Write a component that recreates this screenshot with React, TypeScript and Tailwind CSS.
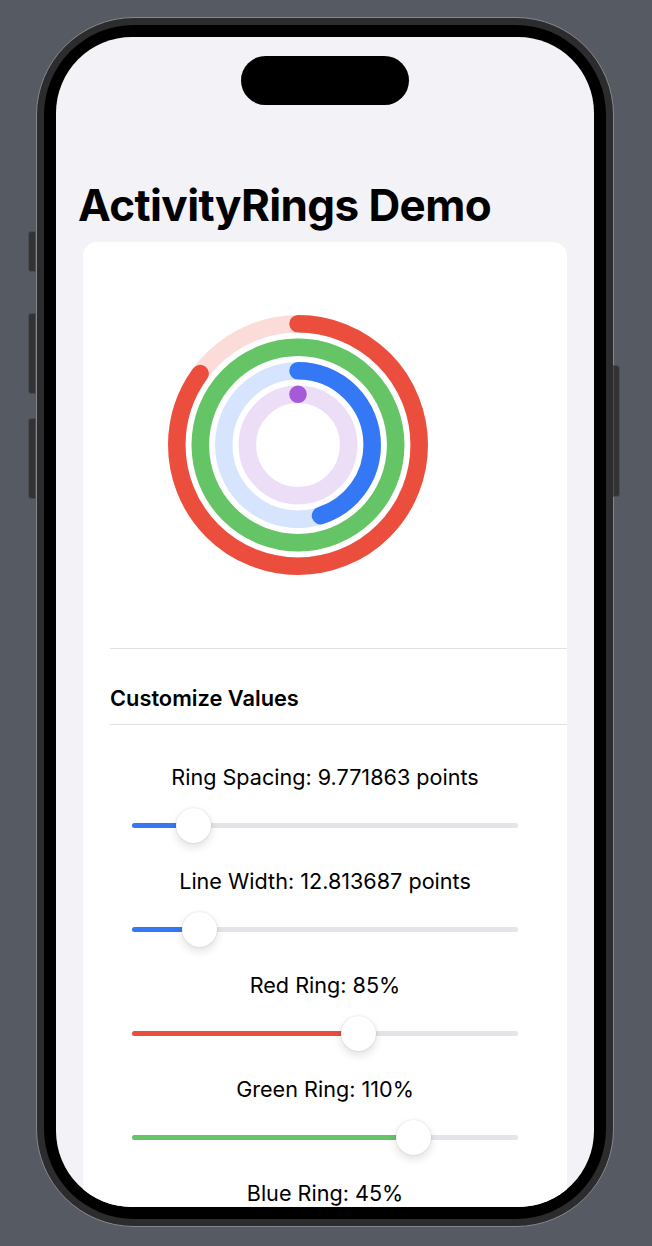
import React from "react";

type RingDef = { r: number; color: string; p: number };

function Rings() {
  const cx = 135;
  const cy = 135;
  const w = 17.5;
  const rings: RingDef[] = [
    { r: 121.2, color: "#eb4e3d", p: 0.85 },
    { r: 97.7, color: "#65c466", p: 1.1 },
    { r: 74.2, color: "#3478f6", p: 0.45 },
    { r: 50.7, color: "#a55bd8", p: 0 },
  ];
  return (
    <svg width={270} height={270} viewBox="0 0 270 270">
      {rings.map((ring) => {
        const C = 2 * Math.PI * ring.r;
        return (
          <g key={ring.color}>
            <circle
              cx={cx}
              cy={cy}
              r={ring.r}
              fill="none"
              stroke={ring.color}
              strokeOpacity={0.2}
              strokeWidth={w}
            />
            {ring.p >= 1 ? (
              <circle cx={cx} cy={cy} r={ring.r} fill="none" stroke={ring.color} strokeWidth={w} />
            ) : ring.p > 0 ? (
              <circle
                cx={cx}
                cy={cy}
                r={ring.r}
                fill="none"
                stroke={ring.color}
                strokeWidth={w}
                strokeLinecap="round"
                strokeDasharray={`${ring.p * C} ${C}`}
                transform={`rotate(-90 ${cx} ${cy})`}
              />
            ) : (
              <circle cx={cx} cy={cy - ring.r} r={w / 2} fill={ring.color} />
            )}
          </g>
        );
      })}
    </svg>
  );
}

function Slider({ thumb, fill }: { thumb: number; fill: string }) {
  return (
    <div className="relative mx-auto flex h-[36px] w-[386px] items-center">
      <div className="flex h-[5px] w-full overflow-hidden rounded-full bg-[#e4e4e9]">
        <div className={`h-full ${fill}`} style={{ width: thumb }} />
      </div>
      <div
        className="absolute top-[0.5px] h-[35px] w-[35px] rounded-full bg-white shadow-[0_4px_10px_rgba(0,0,0,0.13),0_0_1.5px_rgba(0,0,0,0.18)]"
        style={{ left: thumb - 17.5 }}
      />
    </div>
  );
}

function SliderRow({ label, thumb, fill }: { label: string; thumb: number; fill: string }) {
  return (
    <div className="flex flex-col">
      <div className="h-[28px] text-center text-[21.6px] leading-[28px] text-black">{label}</div>
      <div className="mt-[16px]">
        <Slider thumb={thumb} fill={fill} />
      </div>
    </div>
  );
}

export default function App() {
  return (
    <div className="h-[1246px] w-[652px] overflow-hidden bg-[#565b63] pl-[36px] pt-[17px] font-['Inter','Noto_Sans',sans-serif]">
      <div className="relative h-[1210px] w-[578px]">
        {/* side buttons */}
        <div className="absolute left-[-8px] top-[214px] h-[41px] w-[8px] rounded-l-[3px] border border-[#4a4d52] bg-[#333336]" />
        <div className="absolute left-[-8px] top-[296px] h-[81px] w-[8px] rounded-l-[3px] border border-[#4a4d52] bg-[#333336]" />
        <div className="absolute left-[-8px] top-[401px] h-[81px] w-[8px] rounded-l-[3px] border border-[#4a4d52] bg-[#333336]" />
        <div className="absolute right-[-6px] top-[348px] h-[132px] w-[7px] rounded-r-[3px] border border-[#4a4d52] bg-[#333336]" />

        <div className="h-full w-full rounded-[98px] border border-[#85878b] bg-[#2c2c2e] p-[7px]">
          <div className="h-full w-full rounded-[90px] bg-black p-[12px]">
            <div className="relative flex h-full w-full flex-col overflow-hidden rounded-[76px] bg-[#f2f2f7]">
              {/* dynamic island */}
              <div className="absolute left-[185px] top-[19px] h-[49px] w-[168px] rounded-full bg-black" />

              <div className="pl-[22px] pt-[142px]">
                <h1 className="text-[44px] font-bold leading-[52px] tracking-[-0.6px] text-black">
                  ActivityRings Demo
                </h1>
              </div>

              <div className="mx-[27px] mt-[11px] flex-1 rounded-t-[14px] bg-white">
                <div className="flex h-[406px] items-center pl-[80px]">
                  <Rings />
                </div>
                <div className="ml-[27px] h-px bg-[#e0e0e5]" />
                <div className="pl-[27px] pt-[35px] pb-[12px]">
                  <div className="text-[21.8px] font-semibold leading-[28px] text-black">Customize Values</div>
                </div>
                <div className="ml-[27px] h-px bg-[#e0e0e5]" />
                <div className="flex flex-col gap-[24px] pt-[38px]">
                  <SliderRow label="Ring Spacing: 9.771863 points" thumb={61.5} fill="bg-[#3478f6]" />
                  <SliderRow label="Line Width: 12.813687 points" thumb={67} fill="bg-[#3478f6]" />
                  <SliderRow label="Red Ring: 85%" thumb={226} fill="bg-[#eb4e3d]" />
                  <SliderRow label="Green Ring: 110%" thumb={281} fill="bg-[#65c466]" />
                  <SliderRow label="Blue Ring: 45%" thumb={130} fill="bg-[#3478f6]" />
                </div>
              </div>
            </div>
          </div>
        </div>
      </div>
    </div>
  );
}
